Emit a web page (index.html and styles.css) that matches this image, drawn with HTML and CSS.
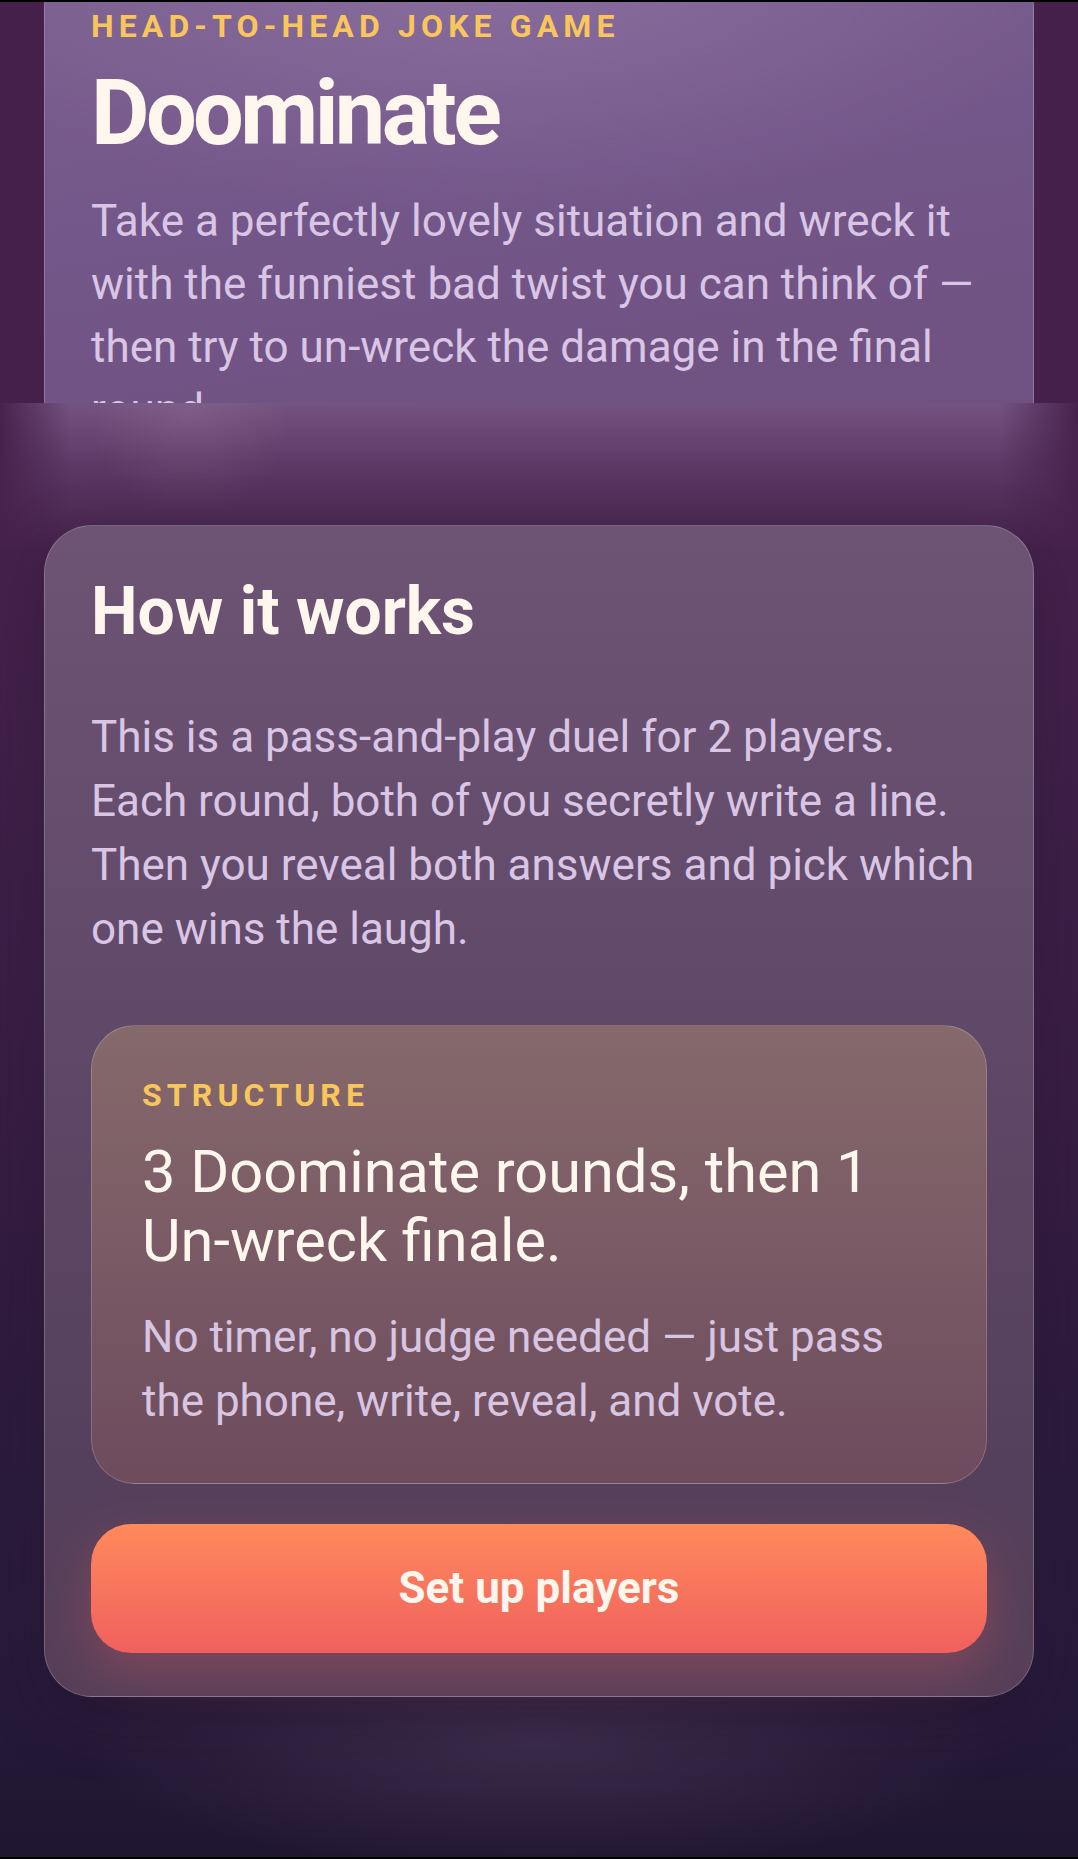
FILE: index.html
```
<!DOCTYPE html>
<html lang="en">
<head>
<meta charset="utf-8">
<title>Doominate</title>
<link rel="stylesheet" href="styles.css">
</head>
<body>
<div class="edge"></div>
<section class="hero-clip">
  <div class="hero-card">
    <p class="eyebrow">Head-to-head joke game</p>
    <h1 class="title">Doominate</h1>
    <p class="lede">Take a perfectly lovely situation and wreck it with the funniest bad twist you can think of — then try to un-wreck the damage in the final round.</p>
  </div>
</section>
<main class="main">
  <section class="card">
    <h2 class="card-title">How it works</h2>
    <p class="card-text">This is a pass-and-play duel for 2 players. Each round, both of you secretly write a line. Then you reveal both answers and pick which one wins the laugh.</p>
    <div class="structure">
      <p class="eyebrow">Structure</p>
      <h3 class="structure-title">3 Doominate rounds, then 1 Un-wreck finale.</h3>
      <p class="structure-text">No timer, no judge needed — just pass the phone, write, reveal, and vote.</p>
    </div>
    <button class="cta" type="button">Set up players</button>
  </section>
</main>
<div class="edge edge-bottom"></div>
</body>
</html>
```
FILE: styles.css
```
* { box-sizing: border-box; }
html, body { margin: 0; padding: 0; }
body {
  width: 1078px;
  background: #000;
  font-family: Roboto, "Noto Sans", "Liberation Sans", sans-serif;
}
.edge { height: 2px; background: #000; }
.edge-bottom { height: 3px; }

.hero-clip {
  height: 401px;
  overflow: hidden;
  padding: 0 44px;
  background: linear-gradient(90deg, #45204b 0%, #4a2451 50%, #45204b 100%);
}
.hero-card {
  margin-top: -42px;
  border: 1px solid rgba(255,255,255,0.22);
  border-radius: 48px;
  padding: 46px 46px 80px;
  background:
    radial-gradient(ellipse 60% 45% at 45% 0%, rgba(150,124,172,0.55), rgba(150,124,172,0) 100%),
    linear-gradient(172deg, #7a5f8e 0%, #74578a 40%, #6c4f7c 100%);
}
.eyebrow {
  margin: 0;
  font-size: 32px;
  line-height: 38px;
  font-weight: 700;
  letter-spacing: 0.16em;
  text-transform: uppercase;
  color: #f8c65c;
}
.title {
  margin: 22px 0 0;
  font-size: 90px;
  line-height: 94.5px;
  font-weight: 700;
  letter-spacing: -0.04em;
  color: #fff6ee;
}
.lede {
  margin: 28px 0 0;
  font-size: 44px;
  line-height: 63px;
  color: #d9c5e4;
}

.main {
  padding: 122px 44px 160px;
  background:
    radial-gradient(circle 100px at 190px 14px, rgba(255,255,255,0.08), rgba(255,255,255,0) 100%),
    linear-gradient(90deg, #47224d 0px, rgba(71,34,77,0) 70px, rgba(71,34,77,0) 1000px, #47224d 1078px) 0 0 / 100% 140px no-repeat,
    linear-gradient(180deg, rgba(150,118,165,0.58) 0px, rgba(130,98,145,0.38) 60px, rgba(110,80,120,0.2) 115px, rgba(110,80,120,0) 150px) 0 0 / 100% 150px no-repeat,
    radial-gradient(ellipse 460px 130px at 50% 1340px, rgba(85,62,95,0.5), rgba(85,62,95,0) 100%),
    linear-gradient(180deg, #47224d 0px, #3a1e44 600px, #2d1b3c 1000px, #251a38 1300px, #1f1631 100%);
}
.card {
  border: 1px solid rgba(255,255,255,0.2);
  border-radius: 48px;
  padding: 46px 46px 43px;
  background: linear-gradient(180deg, #6d5475 0%, #614969 40%, #54405c 80%, #573f59 100%);
  box-shadow: 0 20px 60px rgba(40,20,50,0.35);
}
.card-title {
  margin: 0 0 55px;
  font-size: 66px;
  line-height: 79.2px;
  font-weight: 700;
  color: #fff6ee;
}
.card-text {
  margin: 0;
  font-size: 44px;
  line-height: 63.8px;
  color: #d9c5e4;
}
.structure {
  margin-top: 64px;
  border: 1px solid rgba(255,255,255,0.18);
  border-radius: 44px;
  padding: 50px 50px 50px;
  background: linear-gradient(180deg, #85696b 0%, #7a5a65 50%, #6d4b5d 100%);
}
.structure-title {
  margin: 24px 0 0;
  font-size: 59.5px;
  line-height: 68.6px;
  font-weight: 400;
  color: #fff6ee;
}
.structure-text {
  margin: 29px 0 0;
  font-size: 44px;
  line-height: 64px;
  color: #d8c5e2;
}
.cta {
  display: block;
  width: 100%;
  height: 129px;
  margin-top: 40px;
  border: 0;
  border-radius: 40px;
  background: linear-gradient(180deg, #ff8a5c 0%, #f0605e 100%);
  color: #fff6ee;
  font-family: Roboto, "Noto Sans", sans-serif;
  font-size: 44px;
  line-height: 1;
  font-weight: 700;
  box-shadow: 0 18px 50px rgba(240,96,94,0.28);
}
```
